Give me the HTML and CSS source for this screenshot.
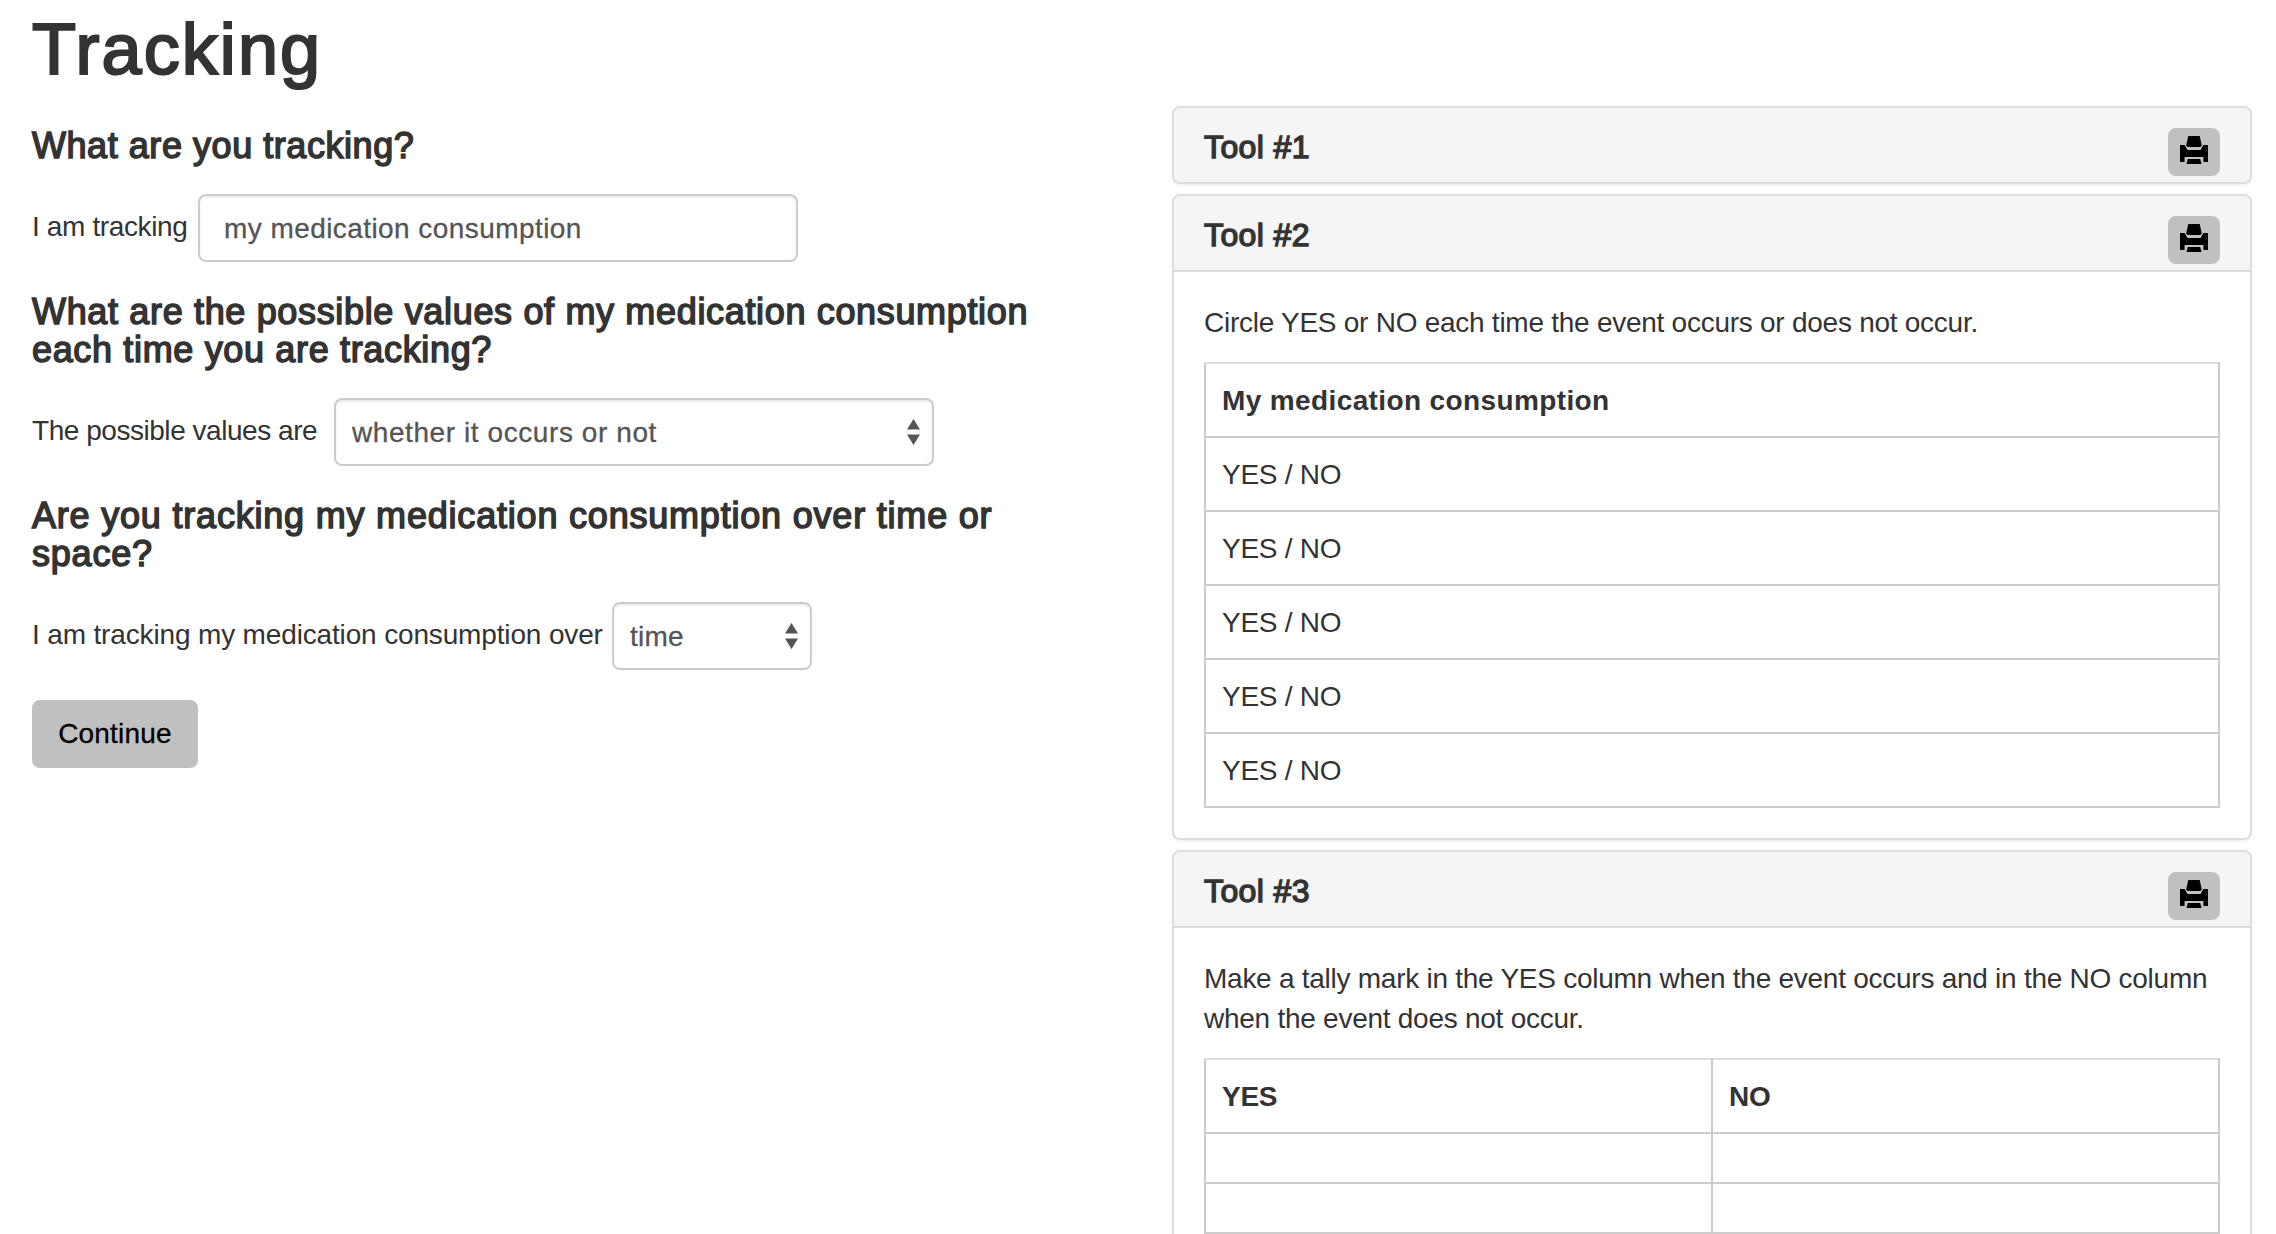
FILE: index.html
```
<!DOCTYPE html>
<html lang="en">
<head>
<meta charset="utf-8">
<title>Tracking</title>
<link rel="stylesheet" href="styles.css">
</head>
<body>
<svg class="sprite" aria-hidden="true">
  <symbol id="print" viewBox="0 0 28 28">
    <path d="M8.3 0h11.4l2 9.2-1.2 1.8h-13L6.2 9.2z"/>
    <path d="M0 9h4.6L7.4 14h13.2L23.4 9H28v17h-4.6v-5H4.6v5H0z"/>
    <path d="M7.8 23h12.4l1.3 5h-15z"/>
  </symbol>
  <symbol id="caret" viewBox="0 0 13 26">
    <path d="M6.5 0l6.5 10.4H0zM0 15.6h13L6.5 26z"/>
  </symbol>
</svg>
<h1>Tracking</h1>
<main class="layout">
  <form class="questions">
    <h3 class="ask-what">What are you tracking?</h3>
    <div class="field">
      <label class="label label-what" for="what">I am tracking</label>
      <input class="control control-text" id="what" type="text" value="my medication consumption">
    </div>
    <h3 class="ask-values">What are the possible values of my medication consumption each time you are tracking?</h3>
    <div class="field">
      <label class="label label-values" for="values">The possible values are</label>
      <div class="picker">
        <select class="control control-values" id="values"><option>whether it occurs or not</option></select>
        <svg class="caret"><use href="#caret"/></svg>
      </div>
    </div>
    <h3 class="ask-over">Are you tracking my medication consumption over time or space?</h3>
    <div class="field">
      <label class="label label-over" for="over">I am tracking my medication consumption over</label>
      <div class="picker">
        <select class="control control-over" id="over"><option>time</option></select>
        <svg class="caret"><use href="#caret"/></svg>
      </div>
    </div>
    <button class="continue" type="button">Continue</button>
  </form>
  <section class="tools">
    <article class="panel">
      <header class="panel-heading">
        <h4>Tool #1</h4>
        <button class="print" type="button" aria-label="Print"><svg><use href="#print"/></svg></button>
      </header>
    </article>
    <article class="panel">
      <header class="panel-heading">
        <h4>Tool #2</h4>
        <button class="print" type="button" aria-label="Print"><svg><use href="#print"/></svg></button>
      </header>
      <div class="panel-body">
        <p>Circle YES or NO each time the event occurs or does not occur.</p>
        <table>
          <tr><th class="wide">My medication consumption</th></tr>
          <tr><td>YES / NO</td></tr>
          <tr><td>YES / NO</td></tr>
          <tr><td>YES / NO</td></tr>
          <tr><td>YES / NO</td></tr>
          <tr><td>YES / NO</td></tr>
        </table>
      </div>
    </article>
    <article class="panel">
      <header class="panel-heading">
        <h4>Tool #3</h4>
        <button class="print" type="button" aria-label="Print"><svg><use href="#print"/></svg></button>
      </header>
      <div class="panel-body">
        <p>Make a tally mark in the YES column when the event occurs and in the NO column when the event does not occur.</p>
        <table>
          <tr><th class="half">YES</th><th>NO</th></tr>
          <tr class="blank"><td></td><td></td></tr>
          <tr class="blank"><td></td><td></td></tr>
        </table>
      </div>
    </article>
  </section>
</main>
</body>
</html>
```

FILE: styles.css
```
* { box-sizing: border-box; }

body {
  margin: 0;
  padding: 10px 24px 0 32px;
  height: 1234px;
  overflow: hidden;
  background: #fff;
  color: #333;
  font: 28px/40px "Liberation Sans", Arial, sans-serif;
}

.sprite { display: none; }

h1, h3, h4, p { margin: 0; }

h1, h3, h4 { font-weight: 400; }

h1 {
  font-size: 72px;
  line-height: 79px;
  letter-spacing: 2.1px;
  -webkit-text-stroke: 2.2px #333;
}

h3 {
  font-size: 36px;
  line-height: 38px;
  -webkit-text-stroke: 1.5px #333;
}

.ask-what { letter-spacing: 0.55px; }
.ask-values { letter-spacing: 0.66px; }
.ask-over { letter-spacing: 0.8px; }

h4 {
  padding-top: 1px;
  font-size: 32px;
  line-height: 36px;
  letter-spacing: 0.4px;
  -webkit-text-stroke: 1.4px #333;
}

.layout {
  display: grid;
  grid-template-columns: 1080px 1080px;
  justify-content: space-between;
  align-items: start;
  padding-top: 17px;
}

.questions { padding-top: 21px; }

.field {
  display: flex;
  align-items: flex-start;
  margin: 29px 0 31px;
}

.field:last-of-type { margin-bottom: 30px; }

.label { padding-top: 13px; white-space: nowrap; }
.label-what { width: 166px; letter-spacing: -0.37px; }
.label-values { width: 302px; letter-spacing: -0.46px; }
.label-over { width: 580px; letter-spacing: -0.15px; }

.control {
  display: block;
  height: 68px;
  margin: 0;
  border: 2px solid #ccc;
  border-radius: 8px;
  background: #fff;
  box-shadow: inset 0 2px 2px rgba(0, 0, 0, 0.075);
  color: #555;
  font: inherit;
  letter-spacing: 0.43px;
  -webkit-text-stroke: 0.3px #555;
  appearance: none;
}

.control-text { width: 600px; padding: 2px 24px 0; }
.control-values { width: 600px; padding: 2px 16px 0; letter-spacing: 0.58px; }
.control-over { width: 200px; padding: 2px 16px 0; letter-spacing: 0.2px; }

.picker { position: relative; }

.caret {
  position: absolute;
  top: 21px;
  right: 14px;
  width: 13px;
  height: 26px;
  fill: #555;
}

.continue {
  display: block;
  width: 166px;
  height: 68px;
  padding: 0;
  border: 0;
  border-radius: 8px;
  background: #c0c0c0;
  color: #000;
  font: inherit;
  letter-spacing: 0.2px;
  -webkit-text-stroke: 0.3px #000;
}

.tools { display: grid; gap: 10px; }

.panel {
  border: 2px solid #ddd;
  border-radius: 8px;
  background: #fff;
  box-shadow: 0 2px 2px rgba(0, 0, 0, 0.05);
}

.panel-heading {
  display: flex;
  justify-content: space-between;
  align-items: flex-start;
  height: 74px;
  padding: 20px 30px 0;
  border-radius: 6px;
  background: #f5f5f5;
}

.panel-heading:not(:last-child) {
  height: 76px;
  border-bottom: 2px solid #ddd;
  border-radius: 6px 6px 0 0;
}

.print {
  display: flex;
  justify-content: center;
  width: 52px;
  height: 48px;
  padding: 8px 0 0;
  border: 0;
  border-radius: 8px;
  background: #c0c0c0;
}

.print svg { width: 28px; height: 28px; fill: #000; }

.panel-body { padding: 31px 30px 30px; letter-spacing: -0.26px; }

p { margin-bottom: 19px; }

table {
  width: 100%;
  border-collapse: collapse;
  table-layout: fixed;
}

th, td {
  height: 74px;
  padding: 17px 16px 15px;
  border: 2px solid #ccc;
  text-align: left;
  line-height: 40px;
}

th { border-top-color: #ddd; }

.wide { letter-spacing: 0.38px; }

.half { width: 507px; }

.blank td { height: 50px; padding: 0; }
```
